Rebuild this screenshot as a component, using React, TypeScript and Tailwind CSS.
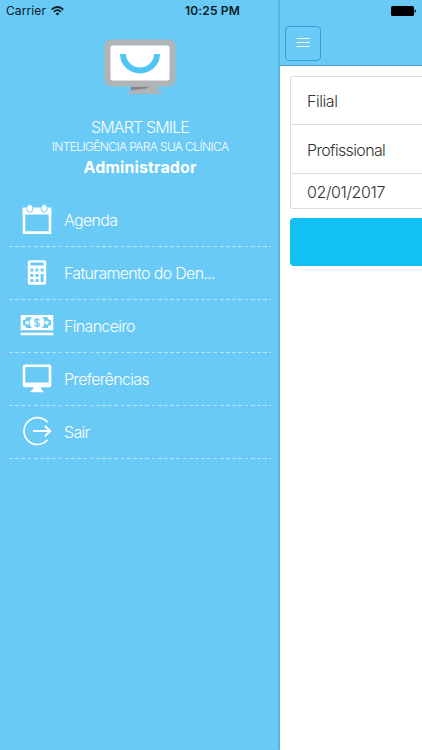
import type { ReactNode } from "react";

interface MenuItem {
  label: string;
  icon: ReactNode;
}

const CalendarIcon = () => (
  <svg width="34" height="34" viewBox="0 0 34 34" fill="none">
    <path d="M4 7.2H30V29.6H4Z" stroke="white" strokeWidth="2.6" />
    <path d="M2.7 4.5H31.3V11.5H2.7Z" fill="white" />
    <rect x="6.8" y="1.6" width="6" height="7.6" rx="3" fill="white" stroke="#69caf6" strokeWidth="0.9" />
    <rect x="21.2" y="1.6" width="6" height="7.6" rx="3" fill="white" stroke="#69caf6" strokeWidth="0.9" />
  </svg>
);

const CalculatorIcon = () => (
  <svg width="34" height="34" viewBox="0 0 34 34">
    <rect x="7.8" y="4.2" width="18.4" height="24.6" rx="2" fill="white" />
    <g fill="#69caf6">
      <rect x="10.4" y="6.5" width="13.2" height="3" />
      <rect x="10.4" y="12.6" width="3" height="2.9" />
      <rect x="15.5" y="12.6" width="3" height="2.9" />
      <rect x="20.6" y="12.6" width="3" height="2.9" />
      <rect x="10.4" y="18" width="3" height="2.9" />
      <rect x="15.5" y="18" width="3" height="2.9" />
      <rect x="20.6" y="18" width="3" height="8" />
      <rect x="10.4" y="23.1" width="3" height="2.9" />
      <rect x="15.5" y="23.1" width="3" height="2.9" />
    </g>
  </svg>
);

const MoneyIcon = () => (
  <svg width="34" height="34" viewBox="0 0 34 34">
    <path d="M0.7 6H33.3V21.3H0.7Z" fill="white" />
    <path d="M0.7 23.8H33.3V26.2H0.7Z" fill="white" />
    <path
      d="M6.2 8.2H12Q9.6 10.3 9.6 13.6T12 19.1H6.2Q6 16.3 3 16V11.3Q6 11 6.2 8.2ZM27.8 8.2H22Q24.4 10.3 24.4 13.6T22 19.1H27.8Q28 16.3 31 16V11.3Q28 11 27.8 8.2Z"
      fill="#69caf6"
    />
    <circle cx="7.2" cy="13.7" r="1.9" fill="white" />
    <circle cx="26.8" cy="13.7" r="1.9" fill="white" />
    <path
      d="M19.5 11.4C19.1 10.4 18.2 10.1 17 10.1C15.6 10.1 14.6 10.6 14.6 11.7C14.6 14.1 19.5 12.9 19.5 15.5C19.5 16.7 18.5 17.3 17 17.3C15.6 17.3 14.7 16.8 14.4 15.7M17 8.8V18.6"
      fill="none"
      stroke="#69caf6"
      strokeWidth="1.3"
    />
  </svg>
);

const DesktopIcon = () => (
  <svg width="34" height="34" viewBox="0 0 34 34">
    <path
      fillRule="evenodd"
      d="M5 2.4H29Q31.3 2.4 31.3 4.7V23Q31.3 25.3 29 25.3H20.6Q20.8 28 23.3 29V30.3H10.7V29Q13.2 28 13.4 25.3H5Q2.7 25.3 2.7 23V4.7Q2.7 2.4 5 2.4ZM5.3 5V20.6H28.7V5Z"
      fill="white"
    />
  </svg>
);

const ExitIcon = () => (
  <svg width="34" height="34" viewBox="0 0 34 34" fill="none" stroke="white">
    <path d="M27.6 7.4A13.4 13.4 0 1 0 27.6 24.8" strokeWidth="1.7" />
    <path d="M13 16.1H30M24.9 11L30.2 16.1L24.9 21.2" strokeWidth="2" />
  </svg>
);

const menuItems: MenuItem[] = [
  { label: "Agenda", icon: <CalendarIcon /> },
  { label: "Faturamento do Den...", icon: <CalculatorIcon /> },
  { label: "Financeiro", icon: <MoneyIcon /> },
  { label: "Preferências", icon: <DesktopIcon /> },
  { label: "Sair", icon: <ExitIcon /> },
];

function Logo() {
  return (
    <svg width="72" height="56" viewBox="0 0 72 56" className="block shrink-0">
      <path d="M27 46H54V51Q54 53 59 53.5V55H23.5V53.5Q27 53 27 50Z" fill="#b1b4b7" />
      <path d="M27 47.5H46L42 49.5L27 51.5Z" fill="#83878a" />
      <rect x="0.5" y="0.5" width="71" height="47" rx="7" fill="#b1b4b7" />
      <rect x="6.5" y="6.5" width="59" height="35" rx="2" fill="white" />
      <path d="M19 15A17 16.5 0 0 0 53 15" fill="none" stroke="#4ec5f3" strokeWidth="6" />
    </svg>
  );
}

function StatusBar() {
  return (
    <div className="absolute inset-x-0 top-0 z-10 flex h-[22px] items-center justify-between pl-[6px] pr-[6px] text-[12px] text-[#071a24]">
      <div className="flex flex-1 items-center gap-[5px]">
        <span className="tracking-[0.1px]">Carrier</span>
        <svg width="13" height="10" viewBox="0 0 13 10" fill="none" stroke="#071a24">
          <path d="M0.7 3.7Q6.5 -1.7 12.3 3.7" strokeWidth="1.7" />
          <path d="M2.9 5.8Q6.5 2.4 10.1 5.8" strokeWidth="1.6" />
          <path d="M4.6 7.5Q6.5 5.7 8.4 7.5L6.5 9.5Z" fill="#071a24" stroke="none" />
        </svg>
      </div>
      <span className="pl-[3px] font-semibold tracking-[0.15px]">10:25 PM</span>
      <div className="flex flex-1 justify-end">
        <svg width="25" height="10" viewBox="0 0 25 10" fill="black">
          <rect x="0" y="0" width="23" height="10" rx="1.5" />
          <path d="M23.6 3.2Q25 3.6 25 5T23.6 6.8Z" />
        </svg>
      </div>
    </div>
  );
}

function SideMenu() {
  return (
    <aside className="flex h-full w-[280px] shrink-0 flex-col items-center bg-[#69caf6] pt-[39px] text-white">
      <Logo />
      <h1 className="mt-[22px] text-[16px] font-light leading-[20px] tracking-[-0.85px]">SMART SMILE</h1>
      <p className="whitespace-nowrap text-[12px] font-light leading-[20px] tracking-[-0.61px]">
        INTELIGÊNCIA PARA SUA CLÍNICA
      </p>
      <p className="text-[16px] font-bold leading-[20px] tracking-[0.1px]">Administrador</p>
      <ul className="mt-[17px] w-full pl-[9px] pr-[9px]">
        {menuItems.map((item) => (
          <li key={item.label} className="h-[53px]">
            <div className="flex h-[52px] items-center pl-[11px]">
              {item.icon}
              <span className="ml-[10px] text-[16px] font-light leading-[24px] tracking-[-0.68px]">{item.label}</span>
            </div>
            <div className="h-px bg-[repeating-linear-gradient(90deg,#b9e5fb_0px,#b9e5fb_3.8px,transparent_3.8px,transparent_6.2px)]" />
          </li>
        ))}
      </ul>
    </aside>
  );
}

function MainPanel() {
  return (
    <main className="h-full min-w-0 flex-1 overflow-hidden bg-white shadow-[0_0_3px_rgba(0,0,0,0.4)]">
      <header className="h-[66px] border-b border-[#4a9ed2] bg-[#69caf6] pl-[5px] pt-[26px]">
        <button className="flex h-[35px] w-[36px] items-center justify-center rounded-[4px] border border-[#2ba3d8] pb-px">
          <svg width="14" height="10" viewBox="0 0 14 10" stroke="white" strokeWidth="1.1">
            <path d="M0.5 0.5H13.5M0.5 4.5H13.5M0.5 8.5H13.5" />
          </svg>
        </button>
      </header>
      <div className="w-[400px] pl-[10px] pt-[10px] text-[16px] font-light text-[#333]">
        <div className="h-[133px] rounded-[2px] border border-[#ddd]">
          <div className="flex h-[48px] items-center border-b border-[#ddd] pl-[16px] pt-px tracking-[-0.45px]">
            Filial
          </div>
          <div className="flex h-[49px] items-center border-b border-[#ddd] pl-[16px] pt-[2px] tracking-[-0.65px]">
            Profissional
          </div>
          <div className="flex h-[34px] items-center pl-[16px] pt-[2px] tracking-[-0.4px]">02/01/2017</div>
        </div>
        <button className="mt-[9px] block h-[48px] w-full rounded-[4px] bg-[#11c1f3]" />
      </div>
    </main>
  );
}

export default function App() {
  return (
    <div className="relative flex h-[750px] w-[422px] overflow-hidden font-['Inter',sans-serif]">
      <StatusBar />
      <SideMenu />
      <MainPanel />
    </div>
  );
}
